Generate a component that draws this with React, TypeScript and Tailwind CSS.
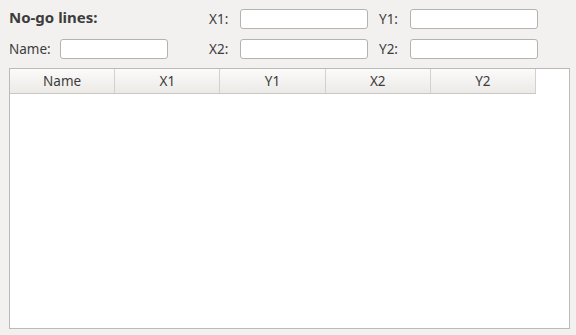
const font = { fontFamily: '"Noto Sans", "DejaVu Sans", sans-serif' };

function Field({ width }: { width: string }) {
  return <div className={`${width} h-[20px] rounded-[3px] border border-[#b6b2ad] bg-white`} />;
}

const columns = ["Name", "X1", "Y1", "X2", "Y2"];

export default function App() {
  return (
    <div
      className="w-[576px] h-[335px] bg-[#f2f1f0] text-[#3c3c3c] text-[13.5px] pt-[9px] pl-[9px] flex flex-col"
      style={font}
    >
      <div className="flex flex-row items-center h-[20px]">
        <div className="w-[200px] font-bold text-[15px] -mt-[3px]">No-go lines:</div>
        <div className="w-[31px]">X1:</div>
        <Field width="w-[128px]" />
        <div className="w-[11px]" />
        <div className="w-[31px]">Y1:</div>
        <Field width="w-[128px]" />
      </div>
      <div className="flex flex-row items-center h-[20px] mt-[10px]">
        <div className="w-[51px]">Name:</div>
        <Field width="w-[108px]" />
        <div className="w-[41px]" />
        <div className="w-[31px]">X2:</div>
        <Field width="w-[128px]" />
        <div className="w-[11px]" />
        <div className="w-[31px]">Y2:</div>
        <Field width="w-[128px]" />
      </div>
      <div className="mt-[9px] w-[561px] h-[261px] border border-[#bcbab6] bg-white flex flex-col">
        <div className="flex flex-row h-[24px] w-[526px] border-b border-[#c9c7c3] bg-gradient-to-b from-[#fbfbfa] to-[#eceae7] box-content">
          {columns.map((c, i) => (
            <div
              key={c}
              className={`flex-1 flex items-center justify-center border-r border-[#d3d1cd] ${i === 4 ? "border-[#bcbab6]" : ""}`}
            >
              {c}
            </div>
          ))}
        </div>
      </div>
    </div>
  );
}
